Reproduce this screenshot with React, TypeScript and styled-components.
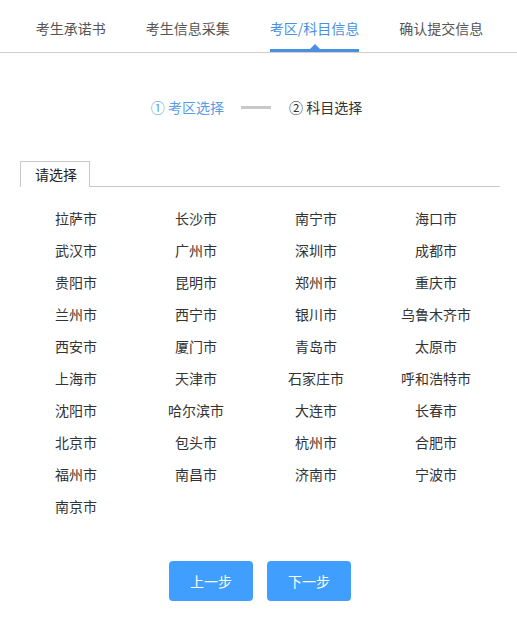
import styled, { createGlobalStyle } from 'styled-components';

const GlobalStyle = createGlobalStyle`
	html, body {
		margin: 0;
		padding: 0;
		background: #fff;
	}
	body {
		font-family: "Noto Sans CJK SC", "Liberation Sans", sans-serif;
		font-size: 14px;
		color: #333;
	}
	* {
		box-sizing: border-box;
	}
`;

const Page = styled.div`
	width: 517px;
	min-height: 617px;
`;
const NavBar = styled.nav`
	display: flex;
	justify-content: center;
	gap: 40px;
	border-bottom: 1px solid #d0d0d0;
	height: 53px;
	padding-top: 17px;
	padding-left: 2px;
`;
const NavTab = styled.div<{ $active?: boolean }>`
	position: relative;
	font-size: 14px;
	line-height: 22px;
	height: 35px;
	color: ${(p) => (p.$active ? '#4a90e2' : '#555')};
	white-space: nowrap;
	${(p) =>
		p.$active &&
		`
		&::after {
			content: '';
			position: absolute;
			left: 0;
			right: 0;
			bottom: 0;
			height: 3px;
			background: #4a90e2;
		}
		&::before {
			content: '';
			position: absolute;
			left: 50%;
			bottom: 3px;
			margin-left: -5px;
			border-left: 5px solid transparent;
			border-right: 5px solid transparent;
			border-bottom: 5px solid #4a90e2;
		}
	`}
`;
const Steps = styled.div`
	display: flex;
	justify-content: center;
	align-items: center;
	margin-top: 43px;
	height: 22px;
	padding-right: 4px;
`;
const Step = styled.span<{ $active?: boolean }>`
	font-size: 14px;
	line-height: 22px;
	color: ${(p) => (p.$active ? '#5a9be8' : '#333')};
	white-space: nowrap;
`;
const StepLine = styled.span`
	width: 30px;
	height: 3px;
	background: #c8c8c8;
	margin: 0 18px 0 17px;
`;
const TabHeader = styled.div`
	display: flex;
	margin: 43px 17px 0 20px;
	border-bottom: 1px solid #c8c8c8;
	height: 26px;
`;
const TabItem = styled.div`
	border: 1px solid #c8c8c8;
	border-bottom: none;
	background: #fff;
	width: 70px;
	height: 26px;
	margin-bottom: -1px;
	padding-left: 14px;
	font-size: 14px;
	line-height: 25px;
	color: #222;
`;
const CityGrid = styled.div`
	display: grid;
	grid-template-columns: repeat(4, 120px);
	grid-auto-rows: 32px;
	padding: 15px 0 0 16px;
`;
const City = styled.div`
	text-align: center;
	font-size: 14px;
	line-height: 32px;
	color: #333;
	white-space: nowrap;
`;
const ButtonRow = styled.div`
	display: flex;
	justify-content: center;
	gap: 14px;
	margin-top: 39px;
	padding-left: 3px;
`;
const Button = styled.button`
	width: 84px;
	height: 40px;
	border: none;
	border-radius: 4px;
	background: #409eff;
	color: #fff;
	font-family: inherit;
	font-size: 14px;
	cursor: pointer;
`;

const tabs = ['考生承诺书', '考生信息采集', '考区/科目信息', '确认提交信息'];
const cities = [
	'拉萨市', '长沙市', '南宁市', '海口市',
	'武汉市', '广州市', '深圳市', '成都市',
	'贵阳市', '昆明市', '郑州市', '重庆市',
	'兰州市', '西宁市', '银川市', '乌鲁木齐市',
	'西安市', '厦门市', '青岛市', '太原市',
	'上海市', '天津市', '石家庄市', '呼和浩特市',
	'沈阳市', '哈尔滨市', '大连市', '长春市',
	'北京市', '包头市', '杭州市', '合肥市',
	'福州市', '南昌市', '济南市', '宁波市',
	'南京市',
];

export default function App() {
	return (
		<>
			<GlobalStyle />
			<Page>
				<NavBar>
					{tabs.map((t) => (
						<NavTab key={t} $active={t === '考区/科目信息'}>
							{t}
						</NavTab>
					))}
				</NavBar>
				<Steps>
					<Step $active>① 考区选择</Step>
					<StepLine />
					<Step>② 科目选择</Step>
				</Steps>
				<TabHeader>
					<TabItem>请选择</TabItem>
				</TabHeader>
				<CityGrid>
					{cities.map((c) => (
						<City key={c}>{c}</City>
					))}
				</CityGrid>
				<ButtonRow>
					<Button type={'button'}>上一步</Button>
					<Button type={'button'}>下一步</Button>
				</ButtonRow>
			</Page>
		</>
	);
}
